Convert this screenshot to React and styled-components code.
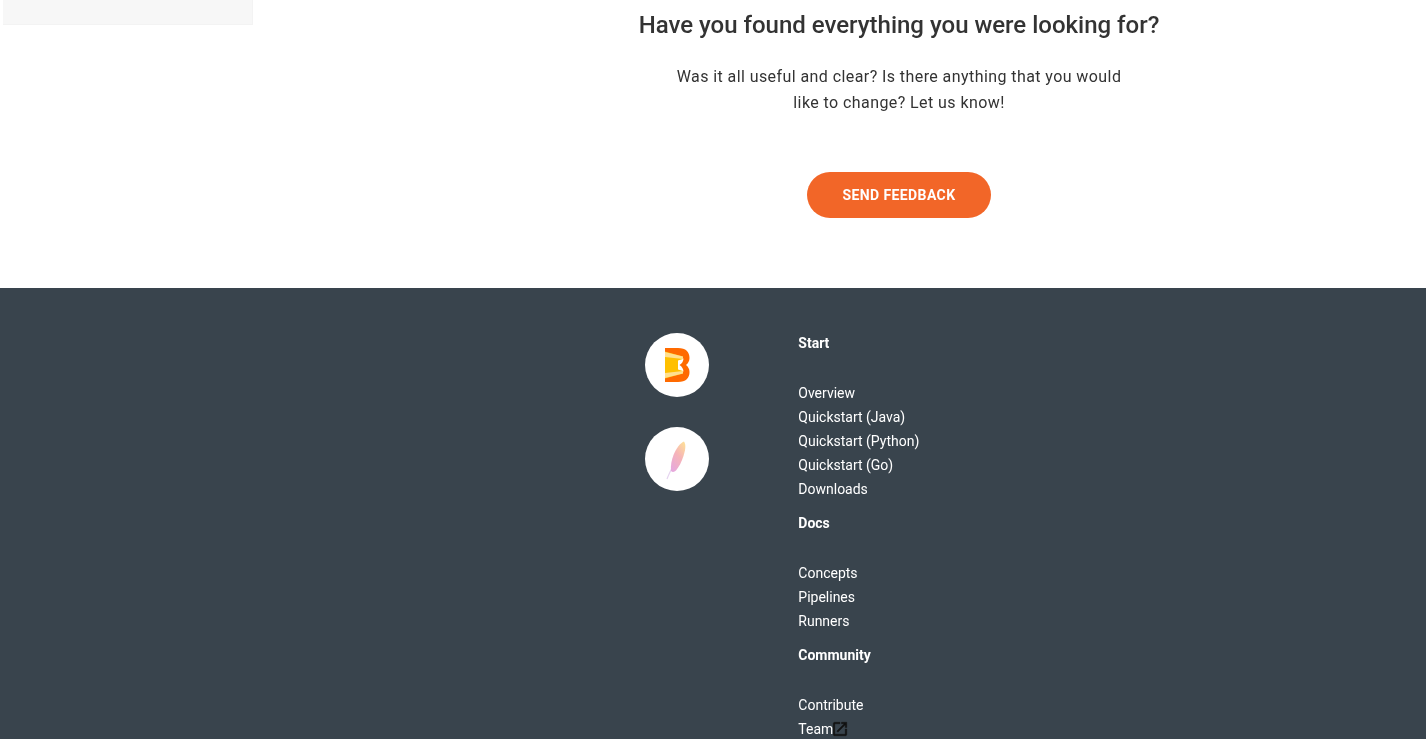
import styled, { createGlobalStyle } from 'styled-components';

const GlobalStyle = createGlobalStyle`
  html, body {
    margin: 0;
    height: 739px;
    overflow: hidden;
    background: #fff;
    font-family: Roboto, 'Liberation Sans', sans-serif;
  }
  #root {
    will-change: transform;
  }
`

const sections = [
  { title: 'Start', links: ['Overview', 'Quickstart (Java)', 'Quickstart (Python)', 'Quickstart (Go)', 'Downloads'] },
  { title: 'Docs', links: ['Concepts', 'Pipelines', 'Runners'] },
  { title: 'Community', links: ['Contribute', 'Team'] },
]

const BeamLogo = () => (
  <svg width="25" height="34" viewBox="0 0 25 34">
    <path d="M0 0H13C21 0 24.500 4 24.500 10C24.500 13 23 15.500 21 17C23 18.500 24.500 21 24.500 24C24.500 30 21 34 13 34H0Z" fill="#ff6a00" />
    <path d="M12 11.500L18.500 10.500C18.500 13 17 15.500 14.500 17C17 18.500 18.500 21 18.500 23.500L12 22.500Z" fill="#fff" />
    <path d="M0 3.500L18 8.500V11L13 12.500V21.500L18 23V25.500L0 30.500Z" fill="#ffc000" />
    <path d="M0 4L18 8.500V11L0 9ZM0 25L18 23V25.500L0 30Z" fill="#ffe08f" />
  </svg>
)

const FeatherLogo = () => (
  <svg width="22" height="42" viewBox="0 -3 22 42">
    <defs>
      <linearGradient id="feather" x1="0.8" y1="0" x2="0.2" y2="1">
        <stop offset="0" stopColor="#fddc9a" />
        <stop offset="0.45" stopColor="#f6b4b8" />
        <stop offset="1" stopColor="#e6a8dc" />
      </linearGradient>
    </defs>
    <path d="M1 38C2.500 34 4 31 6 27" stroke="#e6d4f0" strokeWidth="1.2" fill="none" />
    <path d="M18 0.500C14 2 10 8 7.500 14C5.500 19 4.500 25 5 30C6.500 31.500 8.500 31 10 29.500C13 26 15.500 21 17.500 15C19 10 20.500 4 18 0.500Z" fill="url(#feather)" />
  </svg>
)

const ExternalIcon = () => (
  <TeamIcon width="18" height="18" viewBox="0 0 24 24" fill="#111" stroke="#111" strokeWidth="0.6">
    <path d="M19 19H5V5h7V3H5a2 2 0 0 0-2 2v14a2 2 0 0 0 2 2h14a2 2 0 0 0 2-2v-7h-2v7zM14 3v2h3.590l-9.830 9.830 1.410 1.410L19 6.410V10h2V3h-7z" />
  </TeamIcon>
)

const App = () => {
  return (
    <>
      <GlobalStyle />
      <Top>
        <SidebarStub />
        <Feedback>
          <Question>Have you found everything you were looking for?</Question>
          <Lead>
            Was it all useful and clear? Is there anything that you would
            <br />
            like to change? Let us know!
          </Lead>
          <SendButton>SEND FEEDBACK</SendButton>
        </Feedback>
      </Top>
      <Footer>
        <Logos>
          <LogoCircle><BeamLogo /></LogoCircle>
          <LogoCircle><FeatherLogo /></LogoCircle>
        </Logos>
        <Links>
          {sections.map((s) => (
            <Section key={s.title}>
              <SectionTitle>{s.title}</SectionTitle>
              {s.links.map((l) => (
                <FooterLink key={l}>
                  {l}
                  {l === 'Team' && <ExternalIcon />}
                </FooterLink>
              ))}
            </Section>
          ))}
        </Links>
      </Footer>
    </>
  )
}

const Top = styled.div`
  display: flex;
  align-items: flex-start;
  height: 288px;
  padding-left: 3px;
  box-sizing: border-box;
`

const SidebarStub = styled.div`
  width: 250px;
  height: 25px;
  flex-shrink: 0;
  background: #f7f7f7;
  border-right: 1px solid #f3f3f3;
  border-bottom: 1px solid #f3f3f3;
  box-sizing: border-box;
`

const Feedback = styled.div`
  flex: 1;
  margin-left: 119px;
  display: flex;
  flex-direction: column;
  align-items: center;
  text-align: center;
  color: #333;
`

const Question = styled.h2`
  margin: 8px 0 0;
  font-size: 24px;
  line-height: 34px;
  font-weight: 500;
  color: #333;
`

const Lead = styled.p`
  margin: 22px 0 0;
  font-size: 16px;
  line-height: 26px;
  letter-spacing: 0.42px;
  color: #333;
`

const SendButton = styled.button`
  margin-top: 56px;
  width: 184px;
  height: 46px;
  border: none;
  border-radius: 23px;
  background: #f26628;
  color: #fff;
  font-family: Roboto, 'Liberation Sans', sans-serif;
  font-size: 14px;
  font-weight: 700;
  letter-spacing: 0.4px;
  cursor: pointer;
`

const Footer = styled.footer`
  display: flex;
  height: 451px;
  box-sizing: border-box;
  padding: 43px 0 0 645px;
  background: #39444d;
  color: #fff;
`

const Logos = styled.div`
  width: 153.3px;
  flex-shrink: 0;
  padding-top: 2px;
  display: flex;
  flex-direction: column;
  gap: 30px;
`

const LogoCircle = styled.div`
  width: 64px;
  height: 64px;
  border-radius: 50%;
  background: #fff;
  display: flex;
  align-items: center;
  justify-content: center;
`

const Links = styled.div`
  display: flex;
  flex-direction: column;
  gap: 10px;
`

const Section = styled.div`
  display: flex;
  flex-direction: column;
`

const SectionTitle = styled.div`
  font-size: 14px;
  line-height: 24px;
  font-weight: 700;
  margin-bottom: 26px;
`

const FooterLink = styled.a`
  display: flex;
  align-items: center;
  font-size: 14px;
  line-height: 24px;
  color: #fff;
`

const TeamIcon = styled.svg`
  margin-left: -2px;
`

export default App
